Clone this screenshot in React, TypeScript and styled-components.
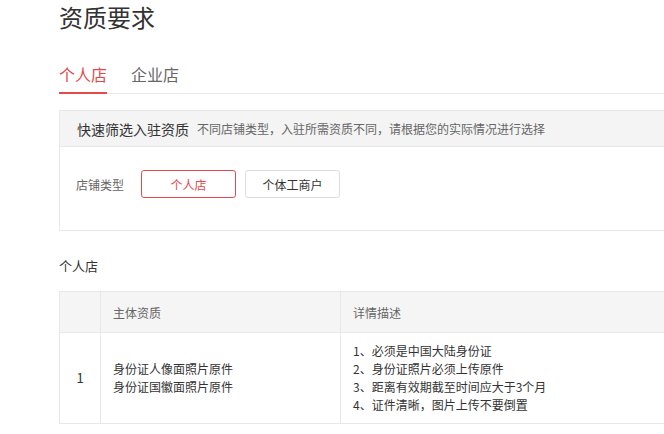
import React, { useState } from "react";
import styled, { createGlobalStyle } from "styled-components";

const RED = "#e4494b";

const GlobalStyle = createGlobalStyle`
  html, body {
    margin: 0;
    padding: 0;
    overflow: hidden;
    background: #fff;
  }
  body {
    font-family: "Microsoft YaHei", "Noto Sans CJK SC", "Noto Sans", sans-serif;
    color: #333;
  }
`;

const shopTypes = ["个人店", "个体工商户"];

const requirements = [
  {
    id: 1,
    subjects: ["身份证人像面照片原件", "身份证国徽面照片原件"],
    details: [
      "1、必须是中国大陆身份证",
      "2、身份证照片必须上传原件",
      "3、距离有效期截至时间应大于3个月",
      "4、证件清晰，图片上传不要倒置"
    ]
  }
];

export default function App() {
  const [tab, setTab] = useState(0);
  const [shopType, setShopType] = useState(0);

  return (
    <>
      <GlobalStyle />
      <Page>
        <Title>资质要求</Title>

        <Tabs>
          {["个人店", "企业店"].map((name, i) => (
            <Tab key={name} active={i === tab} onClick={() => setTab(i)}>
              {name}
            </Tab>
          ))}
        </Tabs>

        <FilterBox>
          <FilterHeader>
            <FilterTitle>快速筛选入驻资质</FilterTitle>
            <FilterHint>不同店铺类型，入驻所需资质不同，请根据您的实际情况进行选择</FilterHint>
          </FilterHeader>
          <FilterBody>
            <FilterLabel>店铺类型</FilterLabel>
            {shopTypes.map((name, i) => (
              <TypeButton
                key={name}
                selected={i === shopType}
                onClick={() => setShopType(i)}
              >
                {name}
              </TypeButton>
            ))}
          </FilterBody>
        </FilterBox>

        <SectionLabel>{shopTypes[shopType]}</SectionLabel>

        <Table>
          <colgroup>
            <col style={{ width: 41 }} />
            <col style={{ width: 240 }} />
            <col />
          </colgroup>
          <thead>
            <tr>
              <Th />
              <Th>主体资质</Th>
              <Th>详情描述</Th>
            </tr>
          </thead>
          <tbody>
            {requirements.map(row => (
              <tr key={row.id}>
                <IndexCell>{row.id}</IndexCell>
                <Td>
                  {row.subjects.map(s => (
                    <Line key={s}>{s}</Line>
                  ))}
                </Td>
                <Td>
                  {row.details.map(d => (
                    <Line key={d}>{d}</Line>
                  ))}
                </Td>
              </tr>
            ))}
          </tbody>
        </Table>
      </Page>
    </>
  );
}

const Page = styled.div`
  width: 1000px;
  padding-left: 59px;
`;

const Title = styled.h1`
  margin: 0;
  font-size: 24px;
  line-height: 34px;
  font-weight: normal;
  color: #333;
`;

const Tabs = styled.div`
  display: flex;
  gap: 24px;
  margin-top: 28px;
  border-bottom: 1px solid #e8e8e8;
`;

const Tab = styled.div<{ active?: boolean }>`
  font-size: 16px;
  line-height: 24px;
  padding-bottom: 6px;
  margin-bottom: -1px;
  cursor: pointer;
  color: ${p => (p.active ? RED : "#666")};
  border-bottom: 2px solid ${p => (p.active ? RED : "transparent")};
`;

const FilterBox = styled.div`
  margin-top: 16px;
  border: 1px solid #e8e8e8;
`;

const FilterHeader = styled.div`
  display: flex;
  align-items: center;
  height: 35px;
  padding: 0 17px;
  background: #f4f4f4;
  border-bottom: 1px solid #e8e8e8;
`;

const FilterTitle = styled.span`
  font-size: 14px;
  color: #333;
`;

const FilterHint = styled.span`
  margin-left: 8px;
  font-size: 12px;
  color: #666;
`;

const FilterBody = styled.div`
  display: flex;
  align-items: center;
  gap: 9px;
  padding: 23px 16px 32px;
`;

const FilterLabel = styled.span`
  width: 56px;
  font-size: 12px;
  color: #666;
`;

const TypeButton = styled.button<{ selected?: boolean }>`
  width: 95px;
  height: 28px;
  padding: 0;
  font-family: inherit;
  font-size: 12px;
  background: #fff;
  border-radius: 3px;
  cursor: pointer;
  color: ${p => (p.selected ? RED : "#333")};
  border: 1px solid ${p => (p.selected ? RED : "#ddd")};
`;

const SectionLabel = styled.div`
  margin-top: 25px;
  font-size: 13px;
  line-height: 20px;
  color: #333;
`;

const Table = styled.table`
  width: 940px;
  margin-top: 15px;
  table-layout: fixed;
  border-collapse: collapse;
  font-size: 12px;
`;

const Th = styled.th`
  height: 40px;
  padding: 0 12px;
  text-align: left;
  font-weight: normal;
  color: #666;
  background: #f5f5f5;
  border: 1px solid #e8e8e8;
`;

const Td = styled.td`
  padding: 9px 12px;
  line-height: 18px;
  color: #333;
  vertical-align: middle;
  border: 1px solid #e8e8e8;
`;

const IndexCell = styled(Td)`
  padding: 0;
  text-align: center;
  font-size: 13px;
`;

const Line = styled.div``;
